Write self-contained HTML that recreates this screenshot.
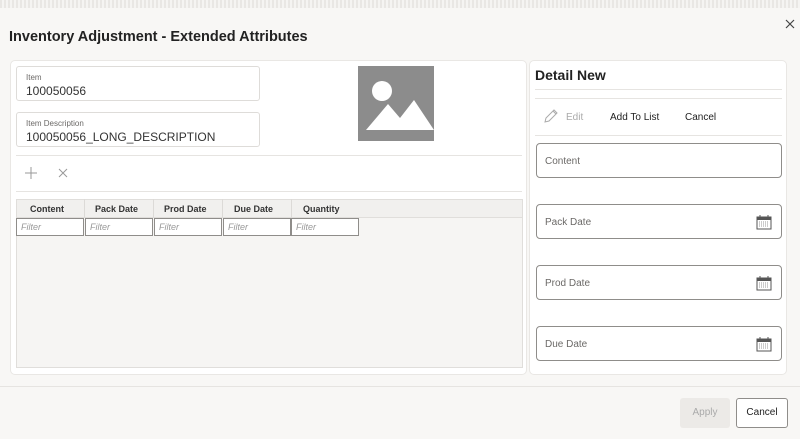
<!DOCTYPE html>
<html><head><style>
*{box-sizing:border-box;margin:0;padding:0}
body{width:800px;height:439px;background:#f8f7f5;font-family:"Liberation Sans",sans-serif;position:relative;overflow:hidden;color:#161513}
.a{position:absolute}
.top{left:0;top:0;width:800px;height:8px;background:repeating-linear-gradient(90deg,#e9e7e4 0 2px,#f5f4f2 2px 4px)}
.panel{background:#fff;border:1px solid #e9e7e4;border-radius:5px}
.fld{background:#fff;border:1px solid #dedcd9;border-radius:3px}
.lbl{font-size:8px;color:#6b6967;position:absolute;left:9px;top:6px}
.val{font-size:12px;color:#333;position:absolute;left:9px;top:17px}
.hd{font-size:9px;font-weight:bold;color:#333;top:204px}
.flt{top:218px;height:18px;width:68px;border:1px solid #8f8d8a;background:#fff;font-size:9px;font-style:italic;color:#999;padding:3px 4px}
.inp{left:536px;width:246px;height:35px;border:1px solid #8f8d8a;border-radius:4px;background:#fff;font-size:10px;color:#6b6967;padding:12px 8px}
.cal{position:absolute;right:9px;top:9px}
</style></head><body>
<div class="a top"></div>
<svg class="a" style="left:785px;top:19px" width="10" height="10"><path d="M1 1L9 9M9 1L1 9" stroke="#444" stroke-width="1.2"/></svg>
<div class="a" style="left:9px;top:29px;font-size:14.5px;font-weight:bold;color:#222">Inventory Adjustment - Extended Attributes</div>

<div class="a panel" style="left:10px;top:60px;width:517px;height:315px"></div>
<div class="a fld" style="left:16px;top:66px;width:244px;height:35px"><span class="lbl">Item</span><span class="val">100050056</span></div>
<div class="a fld" style="left:16px;top:112px;width:244px;height:35px"><span class="lbl">Item Description</span><span class="val">100050056_LONG_DESCRIPTION</span></div>
<div class="a" style="left:358px;top:66px;width:76px;height:75px;background:#8c8c8c">
<svg width="76" height="75"><circle cx="24" cy="25" r="10" fill="#fff"/><path d="M8 64 L30 38 L42 52 L56 34 L76 64 Z" fill="#fff"/></svg></div>
<div class="a" style="left:16px;top:155px;width:506px;height:1px;background:#e6e4e1"></div>
<svg class="a" style="left:25px;top:167px" width="12" height="12"><path d="M6 0V12M0 6H12" stroke="#999" stroke-width="1"/></svg>
<svg class="a" style="left:58px;top:168px" width="10" height="10"><path d="M1 1L9 9M9 1L1 9" stroke="#999" stroke-width="1"/></svg>
<div class="a" style="left:16px;top:191px;width:506px;height:1px;background:#e6e4e1"></div>
<div class="a" style="left:16px;top:199px;width:507px;height:169px;background:#f6f5f3;border:1px solid #e0dedb"></div>
<div class="a" style="left:16px;top:199px;width:507px;height:19px;background:#f1f0ee;border:1px solid #e0dedb"></div>
<div class="a" style="left:84px;top:199px;width:1px;height:19px;background:#dcdad7"></div>
<div class="a" style="left:153px;top:199px;width:1px;height:19px;background:#dcdad7"></div>
<div class="a" style="left:222px;top:199px;width:1px;height:19px;background:#dcdad7"></div>
<div class="a" style="left:291px;top:199px;width:1px;height:19px;background:#dcdad7"></div>
<div class="a hd" style="left:30px">Content</div>
<div class="a hd" style="left:95px">Pack Date</div>
<div class="a hd" style="left:164px">Prod Date</div>
<div class="a hd" style="left:234px">Due Date</div>
<div class="a hd" style="left:303px">Quantity</div>
<div class="a flt" style="left:16px">Filter</div>
<div class="a flt" style="left:85px">Filter</div>
<div class="a flt" style="left:154px">Filter</div>
<div class="a flt" style="left:223px">Filter</div>
<div class="a flt" style="left:291px">Filter</div>

<div class="a panel" style="left:529px;top:60px;width:258px;height:315px"></div>
<div class="a" style="left:535px;top:67px;font-size:14px;font-weight:bold;color:#222">Detail New</div>
<div class="a" style="left:535px;top:89px;width:247px;height:1px;background:#e6e4e1"></div>
<div class="a" style="left:535px;top:98px;width:247px;height:1px;background:#e6e4e1"></div>
<svg class="a" style="left:543px;top:109px" width="15" height="15"><path d="M2 13 L3 9 L11 1 L14 4 L6 12 Z M10 2 L13 5" fill="none" stroke="#aaa" stroke-width="1"/></svg>
<div class="a" style="left:566px;top:112px;font-size:10px;color:#aaa">Edit</div>
<div class="a" style="left:610px;top:112px;font-size:10px;color:#222">Add To List</div>
<div class="a" style="left:685px;top:112px;font-size:10px;color:#222">Cancel</div>
<div class="a" style="left:535px;top:135px;width:247px;height:1px;background:#e6e4e1"></div>
<div class="a inp" style="top:143px">Content</div>
<div class="a inp" style="top:204px">Pack Date<svg class="cal" width="16" height="16"><rect x="1" y="3" width="14" height="12" fill="none" stroke="#555"/><rect x="1" y="3" width="14" height="3" fill="#555"/><path d="M4 1v3M12 1v3" stroke="#555"/><path d="M3 8h10M3 10h10M3 12h10" stroke="#999" stroke-dasharray="1 1"/></svg></div>
<div class="a inp" style="top:265px">Prod Date<svg class="cal" width="16" height="16"><rect x="1" y="3" width="14" height="12" fill="none" stroke="#555"/><rect x="1" y="3" width="14" height="3" fill="#555"/><path d="M4 1v3M12 1v3" stroke="#555"/><path d="M3 8h10M3 10h10M3 12h10" stroke="#999" stroke-dasharray="1 1"/></svg></div>
<div class="a inp" style="top:326px">Due Date<svg class="cal" width="16" height="16"><rect x="1" y="3" width="14" height="12" fill="none" stroke="#555"/><rect x="1" y="3" width="14" height="3" fill="#555"/><path d="M4 1v3M12 1v3" stroke="#555"/><path d="M3 8h10M3 10h10M3 12h10" stroke="#999" stroke-dasharray="1 1"/></svg></div>

<div class="a" style="left:0;top:386px;width:800px;height:1px;background:#e6e4e1"></div>
<div class="a" style="left:680px;top:398px;width:50px;height:30px;background:#eceae7;border-radius:3px;font-size:10px;color:#aaa;text-align:center;line-height:30px">Apply</div>
<div class="a" style="left:736px;top:398px;width:52px;height:30px;background:#fff;border:1px solid #8f8d8a;border-radius:3px;font-size:10px;color:#222;text-align:center;line-height:28px">Cancel</div>
</body></html>
